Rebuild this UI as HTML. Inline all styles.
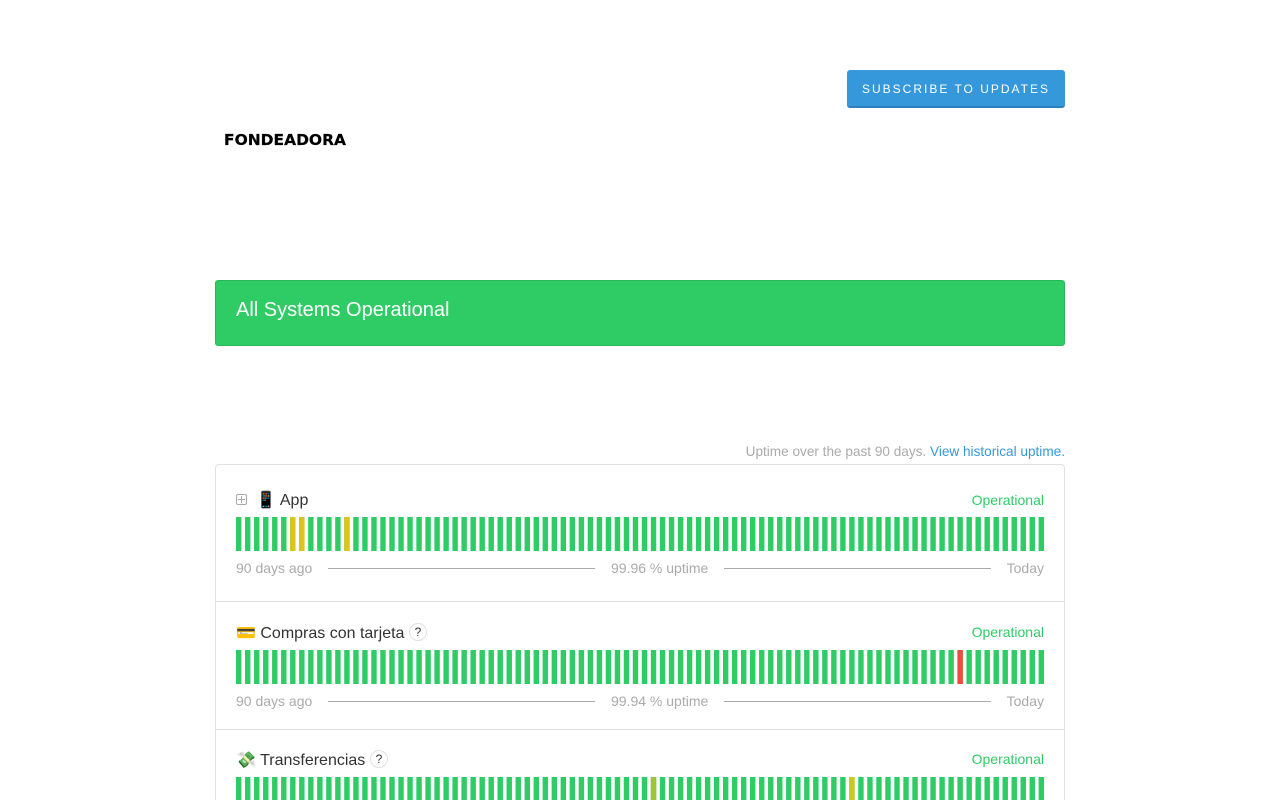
<!DOCTYPE html>
<html lang="es">
<head>
<meta charset="utf-8">
<title>Fondeadora Status</title>
<style>
html,body{margin:0;padding:0;background:#fff;width:1280px;height:800px;overflow:hidden;}
#wrap{position:relative;width:1280px;height:800px;overflow:hidden;font-family:"Liberation Sans",Arial,sans-serif;color:#333;}
.a{position:absolute;white-space:nowrap;}
.btn{left:847px;top:70px;width:218px;height:38px;box-sizing:border-box;background:#3498db;border-bottom:2px solid #2c81ba;border-radius:3px;color:#fff;font-size:12px;letter-spacing:2px;line-height:38.5px;text-align:center;}
.banner{left:215px;top:280px;width:850px;height:66px;box-sizing:border-box;background:#2fcc66;border:1px solid #29b85b;border-radius:3px;color:#fff;font-size:20px;line-height:24px;padding:17px 20px;}
.note{right:215px;top:443px;font-size:13.6px;line-height:17px;color:#aaa;}
.note span{color:#3498db;}
.card{left:215px;top:464px;width:850px;height:336px;box-sizing:border-box;border:1px solid #e0e0e0;border-bottom:0;border-radius:4px 4px 0 0;}
.hr{left:216px;width:848px;height:1px;background:#e0e0e0;}
.t{left:236px;font-size:16px;line-height:20px;color:#333;}
.op{right:236px;font-size:14px;line-height:20px;color:#2fcc66;}
.g{font-size:14px;line-height:20px;color:#aaa;}
.l{height:1px;background:#aaa;}
.q{width:16px;height:16px;border:1px solid #e0e0e0;border-radius:50%;font-size:12px;line-height:16px;text-align:center;color:#333;background:#fff;}
svg.b{position:absolute;left:236px;width:808px;height:34px;}
</style>
</head>
<body>
<div id="wrap">
<div class="a btn">SUBSCRIBE TO UPDATES</div>

<svg class="a" style="left:215px;top:124px" width="150" height="30" viewBox="0 0 150 30">
<text x="9" y="21" font-family="DejaVu Sans" font-weight="700" font-size="15" textLength="122" lengthAdjust="spacingAndGlyphs" fill="#000" stroke="#000" stroke-width=".2">FONDEADORA</text>
</svg>

<div class="a banner">All Systems Operational</div>

<div class="a note">Uptime over the past 90 days. <span>View historical uptime.</span></div>

<div class="a card"></div>

<svg width="0" height="0" style="position:absolute">
<defs>
<pattern id="p" width="5" height="34" patternUnits="userSpaceOnUse"><rect width="3" height="34" fill="#2fcc66"/></pattern>
<g id="bars" fill="#2fcc66">
<path d="M0 0h3v34h-3zm5 0h3v34h-3zm5 0h3v34h-3zm5 0h3v34h-3zm5 0h3v34h-3zm5 0h3v34h-3zm5 0h3v34h-3zm5 0h3v34h-3zm5 0h3v34h-3zm5 0h3v34h-3z"/>
<path transform="translate(50)" d="M0 0h3v34h-3zm5 0h3v34h-3zm5 0h3v34h-3zm5 0h3v34h-3zm5 0h3v34h-3zm5 0h3v34h-3zm5 0h3v34h-3zm5 0h3v34h-3zm5 0h3v34h-3zm5 0h3v34h-3z"/>
<path transform="translate(100)" d="M0 0h3v34h-3zm5 0h3v34h-3zm5 0h3v34h-3zm5 0h3v34h-3zm5 0h3v34h-3zm5 0h3v34h-3zm5 0h3v34h-3zm5 0h3v34h-3zm5 0h3v34h-3zm5 0h3v34h-3z"/>
<path transform="translate(150)" d="M0 0h3v34h-3zm5 0h3v34h-3zm5 0h3v34h-3zm5 0h3v34h-3zm5 0h3v34h-3zm5 0h3v34h-3zm5 0h3v34h-3zm5 0h3v34h-3zm5 0h3v34h-3zm5 0h3v34h-3z"/>
<path transform="translate(200)" d="M0 0h3v34h-3zm5 0h3v34h-3zm5 0h3v34h-3zm5 0h3v34h-3zm5 0h3v34h-3zm5 0h3v34h-3zm5 0h3v34h-3zm5 0h3v34h-3zm5 0h3v34h-3zm5 0h3v34h-3z"/>
<path transform="translate(250)" d="M0 0h3v34h-3zm5 0h3v34h-3zm5 0h3v34h-3zm5 0h3v34h-3zm5 0h3v34h-3zm5 0h3v34h-3zm5 0h3v34h-3zm5 0h3v34h-3zm5 0h3v34h-3zm5 0h3v34h-3z"/>
<path transform="translate(300)" d="M0 0h3v34h-3zm5 0h3v34h-3zm5 0h3v34h-3zm5 0h3v34h-3zm5 0h3v34h-3zm5 0h3v34h-3zm5 0h3v34h-3zm5 0h3v34h-3zm5 0h3v34h-3zm5 0h3v34h-3z"/>
<path transform="translate(350)" d="M0 0h3v34h-3zm5 0h3v34h-3zm5 0h3v34h-3zm5 0h3v34h-3zm5 0h3v34h-3zm5 0h3v34h-3zm5 0h3v34h-3zm5 0h3v34h-3zm5 0h3v34h-3zm5 0h3v34h-3z"/>
<path transform="translate(400)" d="M0 0h3v34h-3zm5 0h3v34h-3zm5 0h3v34h-3zm5 0h3v34h-3zm5 0h3v34h-3zm5 0h3v34h-3zm5 0h3v34h-3zm5 0h3v34h-3zm5 0h3v34h-3zm5 0h3v34h-3z"/>
</g>
</defs>
</svg>

<!-- App -->
<svg class="a" style="left:236px;top:494px" width="11" height="11" viewBox="0 0 11 11"><rect x=".5" y=".5" width="10" height="10" rx="1.5" fill="none" stroke="#aaa"/><path d="M5.5 2v7M2 5.5h7" stroke="#aaa" fill="none"/></svg>
<div class="a t" style="left:256px;top:491px;word-spacing:.4px;font-family:'Liberation Sans','Noto Color Emoji',sans-serif">📱 App</div>
<div class="a op" style="top:490px">Operational</div>
<svg class="b" style="top:517px" viewBox="0 0 448 34" preserveAspectRatio="none">
<use href="#bars"/>
<rect x="30" width="3" height="34" fill="#dcc41c"/>
<rect x="35" width="3" height="34" fill="#dcc41c"/>
<rect x="60" width="3" height="34" fill="#dcc41c"/>
</svg>
<div class="a g" style="left:236px;top:558px">90 days ago</div>
<div class="a l" style="left:328px;top:568px;width:267px"></div>
<div class="a g" style="left:611px;top:558px">99.96 % uptime</div>
<div class="a l" style="left:724px;top:568px;width:267px"></div>
<div class="a g" style="right:236px;top:558px">Today</div>
<div class="a hr" style="top:601px"></div>

<!-- Compras -->
<div class="a t" style="top:624px;font-family:'Liberation Sans','Noto Color Emoji',sans-serif">💳 Compras con tarjeta</div>
<div class="a q" style="left:409px;top:623px">?</div>
<div class="a op" style="top:622px">Operational</div>
<svg class="b" style="top:650px" viewBox="0 0 448 34" preserveAspectRatio="none">
<use href="#bars"/>
<rect x="400" width="3" height="34" fill="#ef4d3c"/>
</svg>
<div class="a g" style="left:236px;top:691px">90 days ago</div>
<div class="a l" style="left:328px;top:701px;width:267px"></div>
<div class="a g" style="left:611px;top:691px">99.94 % uptime</div>
<div class="a l" style="left:724px;top:701px;width:267px"></div>
<div class="a g" style="right:236px;top:691px">Today</div>
<div class="a hr" style="top:729px"></div>

<!-- Transferencias -->
<div class="a t" style="top:751px;font-family:'Liberation Sans','Noto Color Emoji',sans-serif">💸 Transferencias</div>
<div class="a q" style="left:370px;top:750px">?</div>
<div class="a op" style="top:749px">Operational</div>
<svg class="b" style="top:777px;height:23px" viewBox="0 0 448 23" preserveAspectRatio="none">
<use href="#bars"/>
<rect x="230" width="3" height="34" fill="#a0c431"/>
<rect x="340" width="3" height="34" fill="#c8c922"/>
</svg>
</div>
</body>
</html>
